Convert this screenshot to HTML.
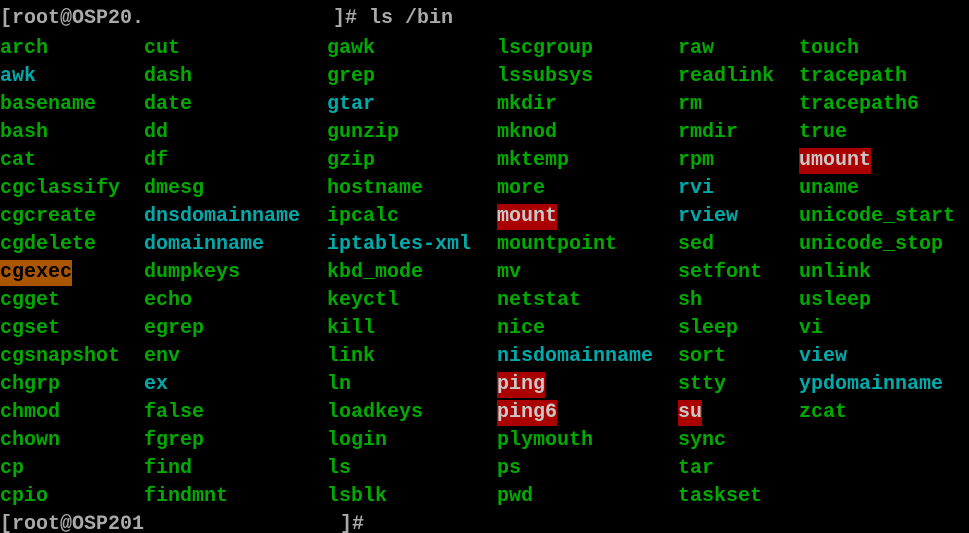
<!DOCTYPE html>
<html><head><meta charset="utf-8"><style>
html,body{margin:0;padding:0;background:#000;width:969px;height:533px;overflow:hidden}
body{position:relative;font-family:"Liberation Mono","DejaVu Sans Mono",monospace;font-size:20px;font-weight:bold;color:#00aa00}
.c{position:absolute;top:35px;line-height:28px;white-space:nowrap}
.c div{height:28px}
.y{color:#00aaaa}
.r{background:#aa0000;color:#c8c8c8;display:inline-block;line-height:26px}
.o{background:#aa5500;color:#000;display:inline-block;line-height:26px}
.p{position:absolute;color:#aaaaaa;line-height:28px;white-space:pre}
</style></head><body>
<div class="p" style="left:0;top:5px">[root@OSP20.</div>
<div class="p" style="left:333px;top:5px">]# ls /bin</div>
<div class="c" style="left:0"><div>arch</div><div class="y">awk</div><div>basename</div><div>bash</div><div>cat</div><div>cgclassify</div><div>cgcreate</div><div>cgdelete</div><div><span class="o">cgexec</span></div><div>cgget</div><div>cgset</div><div>cgsnapshot</div><div>chgrp</div><div>chmod</div><div>chown</div><div>cp</div><div>cpio</div></div>
<div class="c" style="left:144px"><div>cut</div><div>dash</div><div>date</div><div>dd</div><div>df</div><div>dmesg</div><div class="y">dnsdomainname</div><div class="y">domainname</div><div>dumpkeys</div><div>echo</div><div>egrep</div><div>env</div><div class="y">ex</div><div>false</div><div>fgrep</div><div>find</div><div>findmnt</div></div>
<div class="c" style="left:327px"><div>gawk</div><div>grep</div><div class="y">gtar</div><div>gunzip</div><div>gzip</div><div>hostname</div><div>ipcalc</div><div class="y">iptables-xml</div><div>kbd_mode</div><div>keyctl</div><div>kill</div><div>link</div><div>ln</div><div>loadkeys</div><div>login</div><div>ls</div><div>lsblk</div></div>
<div class="c" style="left:497px"><div>lscgroup</div><div>lssubsys</div><div>mkdir</div><div>mknod</div><div>mktemp</div><div>more</div><div><span class="r">mount</span></div><div>mountpoint</div><div>mv</div><div>netstat</div><div>nice</div><div class="y">nisdomainname</div><div><span class="r">ping</span></div><div><span class="r">ping6</span></div><div>plymouth</div><div>ps</div><div>pwd</div></div>
<div class="c" style="left:678px"><div>raw</div><div>readlink</div><div>rm</div><div>rmdir</div><div>rpm</div><div class="y">rvi</div><div class="y">rview</div><div>sed</div><div>setfont</div><div>sh</div><div>sleep</div><div>sort</div><div>stty</div><div><span class="r">su</span></div><div>sync</div><div>tar</div><div>taskset</div></div>
<div class="c" style="left:799px"><div>touch</div><div>tracepath</div><div>tracepath6</div><div>true</div><div><span class="r">umount</span></div><div>uname</div><div>unicode_start</div><div>unicode_stop</div><div>unlink</div><div>usleep</div><div>vi</div><div class="y">view</div><div class="y">ypdomainname</div><div>zcat</div></div>
<div class="p" style="left:0;top:511px">[root@OSP201</div>
<div class="p" style="left:340px;top:511px">]#</div>
</body></html>
